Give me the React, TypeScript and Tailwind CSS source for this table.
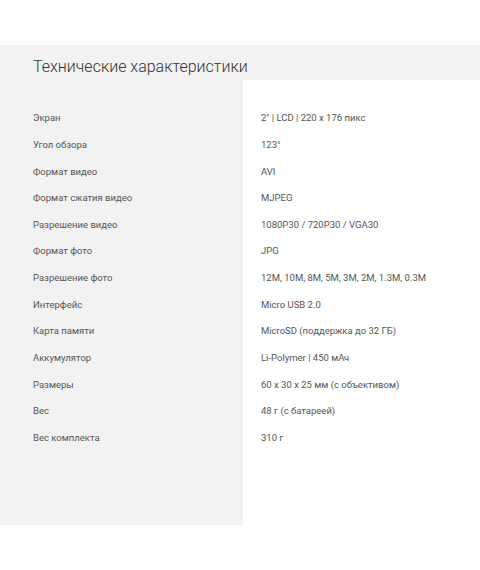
const specs: [string, string][] = [
  ["Экран", "2\" | LCD | 220 x 176 пикс"],
  ["Угол обзора", "123°"],
  ["Формат видео", "AVI"],
  ["Формат сжатия видео", "MJPEG"],
  ["Разрешение видео", "1080P30 / 720P30 / VGA30"],
  ["Формат фото", "JPG"],
  ["Разрешение фото", "12M, 10M, 8M, 5M, 3M, 2M, 1.3M, 0.3M"],
  ["Интерфейс", "Micro USB 2.0"],
  ["Карта памяти", "MicroSD (поддержка до 32 ГБ)"],
  ["Аккумулятор", "Li-Polymer | 450 мАч"],
  ["Размеры", "60 x 30 x 25 мм (с объективом)"],
  ["Вес", "48 г (с батареей)"],
  ["Вес комплекта", "310 г"],
];

export default function App() {
  return (
    <div className="w-[480px] h-[570px] bg-white font-['Roboto',sans-serif] text-[#555]">
      <div className="pt-[45px]">
        <div className="h-[35px] bg-[#f2f2f2] pl-[33px] flex items-end">
          <h2 className="text-[16px] font-light leading-[26px] text-[#333]">Технические характеристики</h2>
        </div>
        <div className="flex">
          <div className="w-[243px] h-[445px] bg-[#f2f2f2] pt-[25px] pl-[33px]">
            {specs.map(([k]) => (
              <div key={k} className="h-[26.67px] flex items-center text-[9.5px]">
                {k}
              </div>
            ))}
          </div>
          <div className="flex-1 pt-[25px] pl-[18px]">
            {specs.map(([k, v]) => (
              <div key={k} className="h-[26.67px] flex items-center text-[9.5px]">
                {v}
              </div>
            ))}
          </div>
        </div>
      </div>
    </div>
  );
}
